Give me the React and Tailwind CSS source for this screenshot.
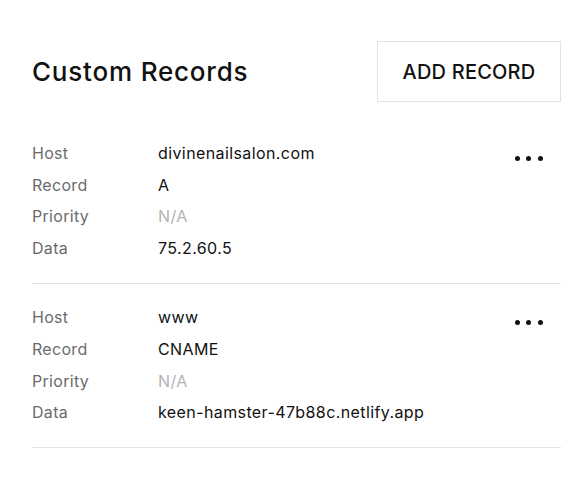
import React from "react";

const records = [
  { host: "divinenailsalon.com", type: "A", priority: "N/A", data: "75.2.60.5" },
  { host: "www", type: "CNAME", priority: "N/A", data: "keen-hamster-47b88c.netlify.app" },
];

function Dots() {
  return (
    <div className="flex items-center gap-[6.7px] mt-[18px] mr-[18px] h-[5px]">
      <span className="block w-[5px] h-[5px] rounded-full bg-[#111]" />
      <span className="block w-[5px] h-[5px] rounded-full bg-[#111]" />
      <span className="block w-[5px] h-[5px] rounded-full bg-[#111]" />
    </div>
  );
}

function Row({ label, value, muted }) {
  return (
    <div className="flex leading-[31.6px] text-[16px]">
      <div className="w-[126px] text-[#6b6b6b] tracking-[0.3px]">{label}</div>
      <div className={(muted ? "text-[#b3b3b3]" : "text-[#111]") + " tracking-[0.4px]"}>{value}</div>
    </div>
  );
}

export default function App() {
  return (
    <div
      className="w-[584px] h-[500px] bg-white pt-[41px] pl-8 pr-[23px]"
      style={{ fontFamily: "Inter, 'Noto Sans', sans-serif" }}
    >
      <div className="flex items-center justify-between h-[61px]">
        <h1 className="text-[26px] font-medium text-[#111] tracking-[0.8px]">Custom Records</h1>
        <button className="h-[61px] w-[184px] border border-[#e3e3e3] text-[20px] font-medium text-[#111] tracking-[0.2px]">
          ADD RECORD
        </button>
      </div>
      <div className="mt-[18px]">
        {records.map((r, i) => (
          <div
            key={i}
            className={
              "flex justify-between border-b border-[#e4e4e4] pt-[18px] " +
              (i === 0 ? "pb-[19px]" : "pb-[18px]")
            }
          >
            <div>
              <Row label="Host" value={r.host} />
              <Row label="Record" value={r.type} />
              <Row label="Priority" value={r.priority} muted />
              <Row label="Data" value={r.data} />
            </div>
            <Dots />
          </div>
        ))}
      </div>
    </div>
  );
}
